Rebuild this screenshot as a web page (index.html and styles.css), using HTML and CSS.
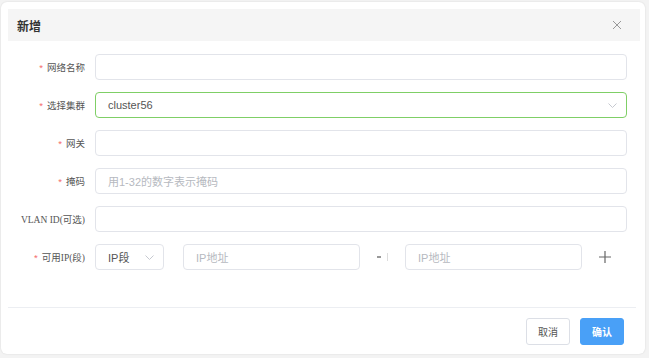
FILE: index.html
```html
<!DOCTYPE html>
<html lang="zh">
<head>
<meta charset="utf-8">
<link rel="stylesheet" href="styles.css">
</head>
<body>
<div class="dialog">
  <div class="header">
    <span class="title">新增</span>
    <svg class="close" width="10" height="10" viewBox="0 0 10 10"><path d="M1 1L9 9M9 1L1 9" stroke="#999" stroke-width="1"/></svg>
  </div>
  <div class="form">
    <div class="row">
      <label class="label"><span class="req">*</span>网络名称</label>
      <div class="input"></div>
    </div>
    <div class="row">
      <label class="label"><span class="req">*</span>选择集群</label>
      <div class="input select active"><span class="val">cluster56</span>
        <svg class="chev" width="9" height="5" viewBox="0 0 9 5"><path d="M0.5 0.5L4.5 4.5L8.5 0.5" fill="none" stroke="#c6c9d0" stroke-width="1"/></svg>
      </div>
    </div>
    <div class="row">
      <label class="label"><span class="req">*</span>网关</label>
      <div class="input"></div>
    </div>
    <div class="row">
      <label class="label"><span class="req">*</span>掩码</label>
      <div class="input"><span class="ph">用1-32的数字表示掩码</span></div>
    </div>
    <div class="row">
      <label class="label">VLAN ID(可选)</label>
      <div class="input"></div>
    </div>
    <div class="row">
      <label class="label"><span class="req">*</span>可用IP(段)</label>
      <div class="iprow">
        <div class="input select small"><span class="val">IP段</span>
          <svg class="chev" width="9" height="5" viewBox="0 0 9 5"><path d="M0.5 0.5L4.5 4.5L8.5 0.5" fill="none" stroke="#c6c9d0" stroke-width="1"/></svg>
        </div>
        <div class="input ip"><span class="ph">IP地址</span></div>
        <div class="sep"><span class="dash"></span><span class="bar"></span></div>
        <div class="input ip"><span class="ph">IP地址</span></div>
        <svg class="plus" width="12" height="12" viewBox="0 0 12 12"><path d="M6 0V12M0 6H12" stroke="#666" stroke-width="1.2"/></svg>
      </div>
    </div>
  </div>
  <div class="footer">
    <button class="btn">取消</button>
    <button class="btn primary">确认</button>
  </div>
</div>
</body>
</html>
```

FILE: styles.css
```css
* { box-sizing: border-box; }
html, body { margin: 0; padding: 0; }
body {
  width: 649px;
  height: 358px;
  background: #f3f3f3;
  font-family: "Liberation Sans", "Noto Sans CJK SC", sans-serif;
  padding: 2px 4px 4px 1px;
}
.dialog {
  width: 644px;
  height: 352px;
  background: #fff;
  border-radius: 6px;
  box-shadow: 0 0 2px rgba(0,0,0,0.12);
  padding: 7px 5px 0 7px;
  display: flex;
  flex-direction: column;
}
.header {
  height: 32px;
  background: #f5f5f5;
  display: flex;
  align-items: center;
  justify-content: space-between;
  padding: 0 18px 0 9px;
}
.title {
  font-size: 12px;
  color: #333;
  font-weight: bold;
}
.close { display: block; }
.form {
  padding: 13px 0 0 0;
  display: flex;
  flex-direction: column;
  gap: 12px;
}
.row {
  display: flex;
  align-items: center;
  height: 26px;
}
.label {
  width: 77px;
  text-align: right;
  font-size: 9.5px;
  color: #555;
  font-family: "Liberation Serif", "Noto Sans CJK SC", serif;
  margin-right: 10px;
  white-space: nowrap;
}
.req {
  color: #f56c6c;
  margin-right: 4px;
  font-family: "Liberation Sans", sans-serif;
}
.input {
  width: 532px;
  height: 26px;
  border: 1px solid #e2e4ea;
  border-radius: 4px;
  display: flex;
  align-items: center;
  padding: 0 12px;
  font-size: 11px;
  color: #555;
  position: relative;
}
.input.active { border-color: #7fcf66; }
.select { justify-content: space-between; padding-right: 9px; }
.ph { color: #b6b9c0; font-size: 11px; }
.val { color: #555; }
.iprow {
  display: flex;
  align-items: center;
}
.input.small { width: 69px; margin-right: 19px; }
.input.ip { width: 177px; }
.sep {
  width: 45px;
  display: flex;
  align-items: center;
  justify-content: center;
  gap: 6px;
}
.dash { width: 4px; height: 2px; background: #999; }
.bar { width: 1px; height: 8px; background: #ddd; }
.plus { margin-left: 17px; display: block; }
.footer {
  margin-top: auto;
  border-top: 1px solid #eceef2;
  margin-right: 4px;
  height: 47px;
  display: flex;
  justify-content: flex-end;
  align-items: flex-start;
  padding-top: 10px;
  padding-right: 12px;
  gap: 10px;
}
.btn {
  width: 44px;
  height: 27px;
  border: 1px solid #dcdfe6;
  border-radius: 3px;
  background: #fff;
  font-size: 10px;
  color: #555;
  font-family: "Liberation Sans", "Noto Sans CJK SC", sans-serif;
  padding: 0;
}
.btn.primary {
  background: #49a0f7;
  border-color: #49a0f7;
  color: #fff;
  font-weight: bold;
}
```
